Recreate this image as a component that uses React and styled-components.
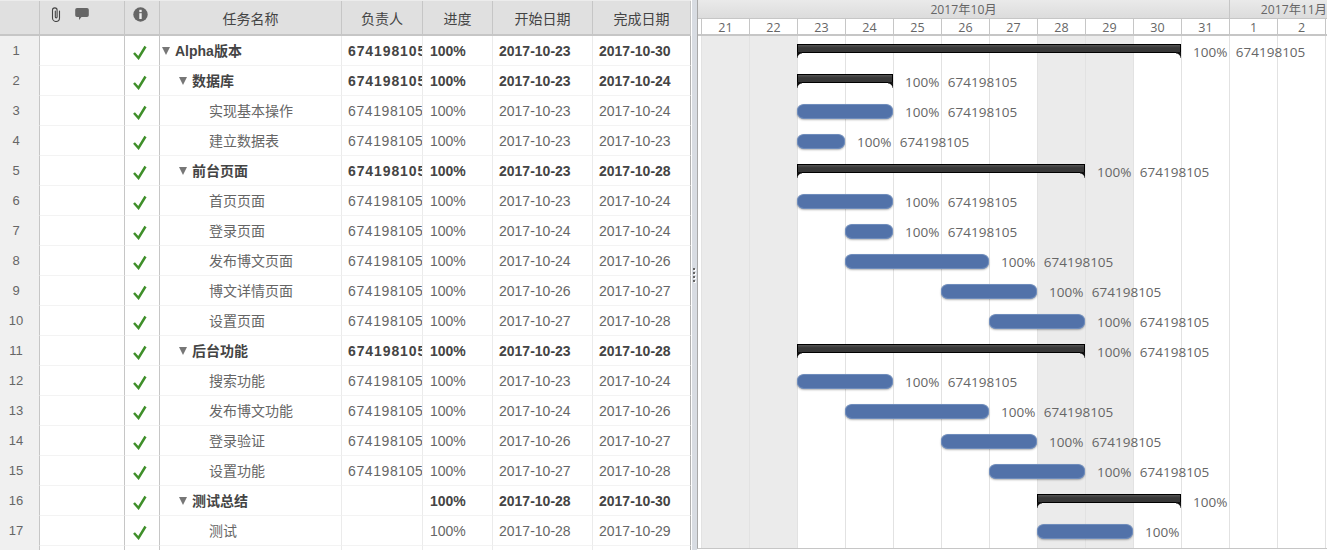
import React from 'react'
import styled, { createGlobalStyle } from 'styled-components'

const DAY = 48
const OWNER = '674198105'
const COLUMNS = '40px 85px 35px 182px 81px 70px 100px 98px'

const tasks = [
  { name: 'Alpha版本', level: 0, group: true, start: '2017-10-23', end: '2017-10-30', from: 2, days: 8, owner: OWNER },
  { name: '数据库', level: 1, group: true, start: '2017-10-23', end: '2017-10-24', from: 2, days: 2, owner: OWNER },
  { name: '实现基本操作', level: 2, start: '2017-10-23', end: '2017-10-24', from: 2, days: 2, owner: OWNER },
  { name: '建立数据表', level: 2, start: '2017-10-23', end: '2017-10-23', from: 2, days: 1, owner: OWNER },
  { name: '前台页面', level: 1, group: true, start: '2017-10-23', end: '2017-10-28', from: 2, days: 6, owner: OWNER },
  { name: '首页页面', level: 2, start: '2017-10-23', end: '2017-10-24', from: 2, days: 2, owner: OWNER },
  { name: '登录页面', level: 2, start: '2017-10-24', end: '2017-10-24', from: 3, days: 1, owner: OWNER },
  { name: '发布博文页面', level: 2, start: '2017-10-24', end: '2017-10-26', from: 3, days: 3, owner: OWNER },
  { name: '博文详情页面', level: 2, start: '2017-10-26', end: '2017-10-27', from: 5, days: 2, owner: OWNER },
  { name: '设置页面', level: 2, start: '2017-10-27', end: '2017-10-28', from: 6, days: 2, owner: OWNER },
  { name: '后台功能', level: 1, group: true, start: '2017-10-23', end: '2017-10-28', from: 2, days: 6, owner: OWNER },
  { name: '搜索功能', level: 2, start: '2017-10-23', end: '2017-10-24', from: 2, days: 2, owner: OWNER },
  { name: '发布博文功能', level: 2, start: '2017-10-24', end: '2017-10-26', from: 3, days: 3, owner: OWNER },
  { name: '登录验证', level: 2, start: '2017-10-26', end: '2017-10-27', from: 5, days: 2, owner: OWNER },
  { name: '设置功能', level: 2, start: '2017-10-27', end: '2017-10-28', from: 6, days: 2, owner: OWNER },
  { name: '测试总结', level: 1, group: true, start: '2017-10-28', end: '2017-10-30', from: 7, days: 3, owner: '' },
  { name: '测试', level: 2, start: '2017-10-28', end: '2017-10-29', from: 7, days: 2, owner: '' },
]

const days = [21, 22, 23, 24, 25, 26, 27, 28, 29, 30, 31, 1, 2, 3]
const weekend = [21, 22, 28, 29]

const GlobalStyle = createGlobalStyle`
  html, body {
    margin: 0;
    padding: 0;
    height: 550px;
    overflow: hidden;
    background: #fff;
  }
  body {
    font-family: "Liberation Sans", "Noto Sans CJK SC", sans-serif;
    font-size: 14px;
    color: #555;
  }
`

const Page = styled.div`
  display: flex;
  width: 1327px;
  height: 550px;
  overflow: hidden;
`

const TablePane = styled.div`
  width: 691px;
  flex: none;
  display: flex;
  flex-direction: column;
  overflow: hidden;
`

const HeadRow = styled.div`
  display: grid;
  grid-template-columns: ${COLUMNS};
  height: 36px;
  flex: none;
  box-sizing: border-box;
  background: #e0e0e0;
  border-top: 1px solid #ececec;
  border-bottom: 2px solid #c6c6c6;
`

const HeadCell = styled.div`
  display: flex;
  align-items: center;
  justify-content: center;
  box-sizing: border-box;
  border-right: 1px solid #c6c6c6;
  color: #444;
  font-size: 14px;
`

const IconHead = styled(HeadCell)`
  align-items: flex-start;
  padding-top: 6px;
  gap: 14px;
  justify-content: flex-start;
  padding-left: ${(p) => p.$pad}px;
`

const Row = styled.div`
  display: grid;
  grid-template-columns: ${COLUMNS};
  height: 30px;
  flex: none;
  font-weight: ${(p) => (p.$group ? 700 : 400)};
  color: ${(p) => (p.$group ? '#444' : '#666')};
`

const Cell = styled.div`
  display: flex;
  align-items: center;
  box-sizing: border-box;
  padding-left: ${(p) => p.$pad || 0}px;
  border-right: 1px solid ${(p) => (p.$strong ? '#c6c6c6' : '#ebebeb')};
  border-bottom: 1px solid #f3f3f3;
  white-space: nowrap;
  overflow: hidden;
`

const NameCell = styled(Cell)`
  padding-bottom: 1px;
`

const OwnerCell = styled(Cell)`
  letter-spacing: ${(p) => (p.$group ? 0.9 : 0.6)}px;
`

const EndCell = styled(Cell)`
  border-right-color: #b0b0b0;
`

const NumCell = styled(Cell)`
  background: #f0f0f0;
  border-bottom-color: #f0f0f0;
  color: #666;
  font-weight: 400;
  font-size: 13px;
  justify-content: center;
  padding-right: 7px;
`

const CheckCell = styled(Cell)`
  padding-top: 3px;
`

const Caret = styled.span`
  width: 0;
  height: 0;
  flex: none;
  margin-right: 5px;
  margin-top: 1px;
  border-left: 4.5px solid transparent;
  border-right: 4.5px solid transparent;
  border-top: 8px solid #777;
`

const Splitter = styled.div`
  width: 6px;
  flex: none;
  box-sizing: border-box;
  display: flex;
  flex-direction: column;
  align-items: flex-start;
  justify-content: center;
  gap: 2px;
  background: #d8dce2;
  border-left: 1px solid #fff;
  padding-left: 1px;
`

const Grip = styled.i`
  width: 2px;
  height: 2px;
  background: #666;
  box-shadow: 1px 1px 0 #fff;
`

const ChartPane = styled.div`
  position: relative;
  flex: 1;
  height: 549px;
  overflow: hidden;
  box-sizing: border-box;
  border-left: 1px solid #a8a8a8;
  border-bottom: 1px solid #c6c6c6;
  display: flex;
  flex-direction: column;
`

const Months = styled.div`
  display: flex;
  height: 18px;
  flex: none;
  padding-left: 3px;
  background: linear-gradient(#eaeaea, #dcdcdc);
`

const Month = styled.div`
  width: ${(p) => p.$width}px;
  flex: none;
  box-sizing: border-box;
  padding-right: ${(p) => (p.$last ? 0 : 3)}px;
  border-left: ${(p) => (p.$last ? '1px solid #c6c6c6' : 'none')};
  font-family: "Open Sans", "Noto Sans CJK SC", sans-serif;
  font-size: 12.2px;
  line-height: 20px;
  color: #666;
  text-align: ${(p) => (p.$last ? 'right' : 'center')};
  white-space: nowrap;
`

const DayRow = styled.div`
  display: flex;
  height: 18px;
  flex: none;
  box-sizing: border-box;
  padding-left: 3px;
  border-top: 1px solid #c6c6c6;
  border-bottom: 2px solid #c6c6c6;
  background: #fff;
`

const DayCell = styled.div`
  width: ${DAY}px;
  flex: none;
  box-sizing: border-box;
  border-left: 1px solid #c6c6c6;
  text-align: center;
  font-family: "Open Sans", sans-serif;
  font-size: 12.5px;
  line-height: 17px;
  color: #666;
`

const Body = styled.div`
  position: relative;
  flex: 1;
`

const GridLines = styled.div`
  position: absolute;
  inset: 0 0 0 3px;
  display: flex;
`

const GridDay = styled.div`
  width: ${DAY}px;
  flex: none;
  box-sizing: border-box;
  border-left: 1px solid #e2e2e2;
  background: ${(p) => (p.$off ? '#ebebeb' : 'transparent')};
`

const BarRows = styled.div`
  position: relative;
  display: flex;
  flex-direction: column;
`

const BarRow = styled.div`
  display: flex;
  align-items: center;
  height: 30px;
  padding-left: ${(p) => 3 + p.$from * DAY}px;
`

const TaskBar = styled.div`
  width: ${(p) => p.$days * DAY}px;
  height: 15px;
  flex: none;
  box-sizing: border-box;
  margin-top: 1px;
  border: 1px solid #6f8dbd;
  border-radius: 7px / 6px;
  background: #5272a9;
  box-shadow: 0 1px 2px rgba(0, 0, 0, 0.3);
`

const SummaryBar = styled.div`
  position: relative;
  width: ${(p) => p.$days * DAY}px;
  height: 9px;
  flex: none;
  box-sizing: border-box;
  margin-top: -5px;
  border: 1px solid #000;
  background: linear-gradient(#555, #383838 40%);
  &::before, &::after {
    content: '';
    position: absolute;
    top: 100%;
    width: 5px;
    height: 6px;
  }
  &::before {
    left: -1px;
    background: radial-gradient(circle at 100% 100%, transparent 4px, #111 5px);
  }
  &::after {
    right: -1px;
    background: radial-gradient(circle at 0 100%, transparent 4px, #111 5px);
  }
`

const BarLabel = styled.span`
  margin-left: 12px;
  margin-top: 1px;
  font-family: "Open Sans", sans-serif;
  font-size: 13.5px;
  color: #666;
  white-space: nowrap;
  word-spacing: 5px;
`

const Clip = () => (
  <svg width="10" height="15" viewBox="0 0 10 15" fill="none" stroke="#444" strokeWidth="1.1" strokeLinecap="round">
    <path d="M8.500 4v7a3.500 3.500 0 0 1-7 0V3.200a2.300 2.300 0 0 1 4.600 0V10a.9.9 0 0 1-1.800 0V4" />
  </svg>
)

const Bubble = () => (
  <svg width="14" height="14" viewBox="0 0 14 14" fill="#666">
    <path d="M2 1h10a1.800 1.800 0 0 1 1.800 1.800v5.400A1.800 1.800 0 0 1 12 10H6.500L4 13v-3H2A1.800 1.800 0 0 1 .2 8.200V2.800A1.800 1.800 0 0 1 2 1z" />
  </svg>
)

const InfoIcon = () => (
  <svg width="15" height="15" viewBox="0 0 15 15">
    <circle cx="7.500" cy="7.500" r="7.200" fill="#666" />
    <rect x="6.300" y="2.800" width="2.400" height="2.300" fill="#eee" />
    <rect x="6.300" y="6.200" width="2.400" height="5.800" fill="#eee" />
  </svg>
)

const Check = () => (
  <svg width="16" height="15" viewBox="0 0 16 15" fill="none" stroke="#3f8f2a" strokeWidth="2.500">
    <path d="M2 8l4.500 5L13.500 1.500" />
  </svg>
)

export default function App() {
  return (
    <Page>
      <GlobalStyle />
      <TablePane>
        <HeadRow>
          <HeadCell />
          <IconHead $pad={11}>
            <Clip />
            <Bubble />
          </IconHead>
          <IconHead $pad={8}>
            <InfoIcon />
          </IconHead>
          <HeadCell>任务名称</HeadCell>
          <HeadCell>负责人</HeadCell>
          <HeadCell>进度</HeadCell>
          <HeadCell>开始日期</HeadCell>
          <HeadCell>完成日期</HeadCell>
        </HeadRow>
        {tasks.map((task, i) => (
          <Row key={i} $group={task.group}>
            <NumCell $strong>{i + 1}</NumCell>
            <Cell $strong />
            <CheckCell $strong $pad={7}>
              <Check />
            </CheckCell>
            <NameCell $pad={task.level === 0 ? 2 : task.level === 1 ? 19 : 49}>
              {task.group && <Caret />}
              {task.name}
            </NameCell>
            <OwnerCell $pad={6} $group={task.group}>{task.owner}</OwnerCell>
            <Cell $pad={7}>100%</Cell>
            <Cell $pad={6}>{task.start}</Cell>
            <EndCell $pad={6}>{task.end}</EndCell>
          </Row>
        ))}
        <Row>
          <NumCell $strong />
          <Cell $strong />
          <Cell $strong />
          <Cell />
          <Cell />
          <Cell />
          <Cell />
          <EndCell />
        </Row>
      </TablePane>

      <Splitter>
        <Grip />
        <Grip />
        <Grip />
        <Grip />
      </Splitter>

      <ChartPane>
        <Months>
          <Month $width={DAY * 11}>2017年10月</Month>
          <Month $width={98} $last>2017年11月</Month>
        </Months>
        <DayRow>
          {days.map((d, i) => (
            <DayCell key={i}>{d}</DayCell>
          ))}
        </DayRow>
        <Body>
          <GridLines>
            {days.map((d, i) => (
              <GridDay key={i} $off={i < 11 && weekend.includes(d)} />
            ))}
          </GridLines>
          <BarRows>
            {tasks.map((task, i) => (
              <BarRow key={i} $from={task.from}>
                {task.group ? <SummaryBar $days={task.days} /> : <TaskBar $days={task.days} />}
                <BarLabel>
                  100% {task.owner}
                </BarLabel>
              </BarRow>
            ))}
          </BarRows>
        </Body>
      </ChartPane>
    </Page>
  )
}
